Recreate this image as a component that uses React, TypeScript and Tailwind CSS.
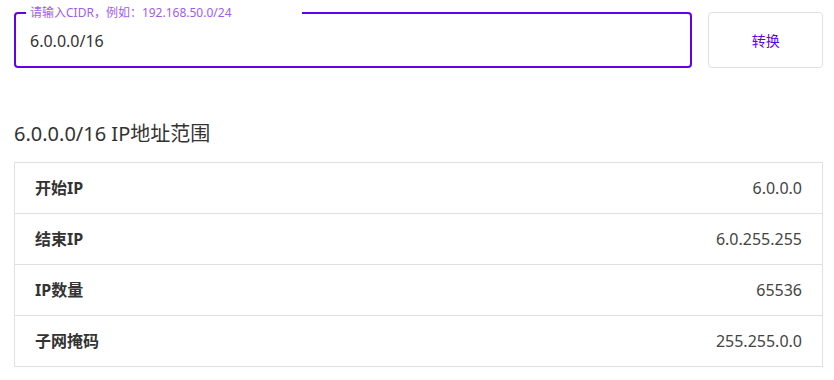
import { useState } from 'react';

const rows = [
  { label: '开始IP', value: '6.0.0.0' },
  { label: '结束IP', value: '6.0.255.255' },
  { label: 'IP数量', value: '65536' },
  { label: '子网掩码', value: '255.255.0.0' },
];

export default function App() {
  const [cidr, setCidr] = useState('6.0.0.0/16');

  return (
    <div
      className="min-h-[380px] bg-white pt-3 pl-[14px] pr-[11px] text-[#333]"
      style={{ fontFamily: '"Noto Sans", "Noto Sans CJK SC", sans-serif' }}
    >
      {/* 입력 영역 */}
      <div className="flex gap-4">
        <div className="relative h-14 w-[680px] rounded-[4px] border-2 border-[#6200ea]">
          <span className="absolute -top-[9px] left-[10px] w-[276px] bg-white px-[4px] text-[12px] leading-4 text-[#a05cf0]">
            请输入CIDR，例如：192.168.50.0/24
          </span>
          <input
            value={cidr}
            onChange={(e) => setCidr(e.target.value)}
            className="h-full w-full bg-transparent px-[14px] pt-[1px] text-[16px] text-[#333] outline-none"
          />
        </div>
        <button
          type="button"
          className="h-14 w-[115px] rounded-[4px] border border-[#e0e0e0] bg-white text-[14px] text-[#6200ea]"
        >
          转换
        </button>
      </div>

      <h2 className="mt-[52px] text-[20px] leading-7 text-[#333]">6.0.0.0/16 IP地址范围</h2>

      <div className="mt-[14px] border-x border-t border-[#e0e0e0]">
        {rows.map((row) => (
          <div
            key={row.label}
            className="flex h-[51px] items-center justify-between border-b border-[#e0e0e0] px-5 text-[16px]"
          >
            <span className="font-bold text-[#333]">{row.label}</span>
            <span className="text-[#444]">{row.value}</span>
          </div>
        ))}
      </div>
    </div>
  );
}
